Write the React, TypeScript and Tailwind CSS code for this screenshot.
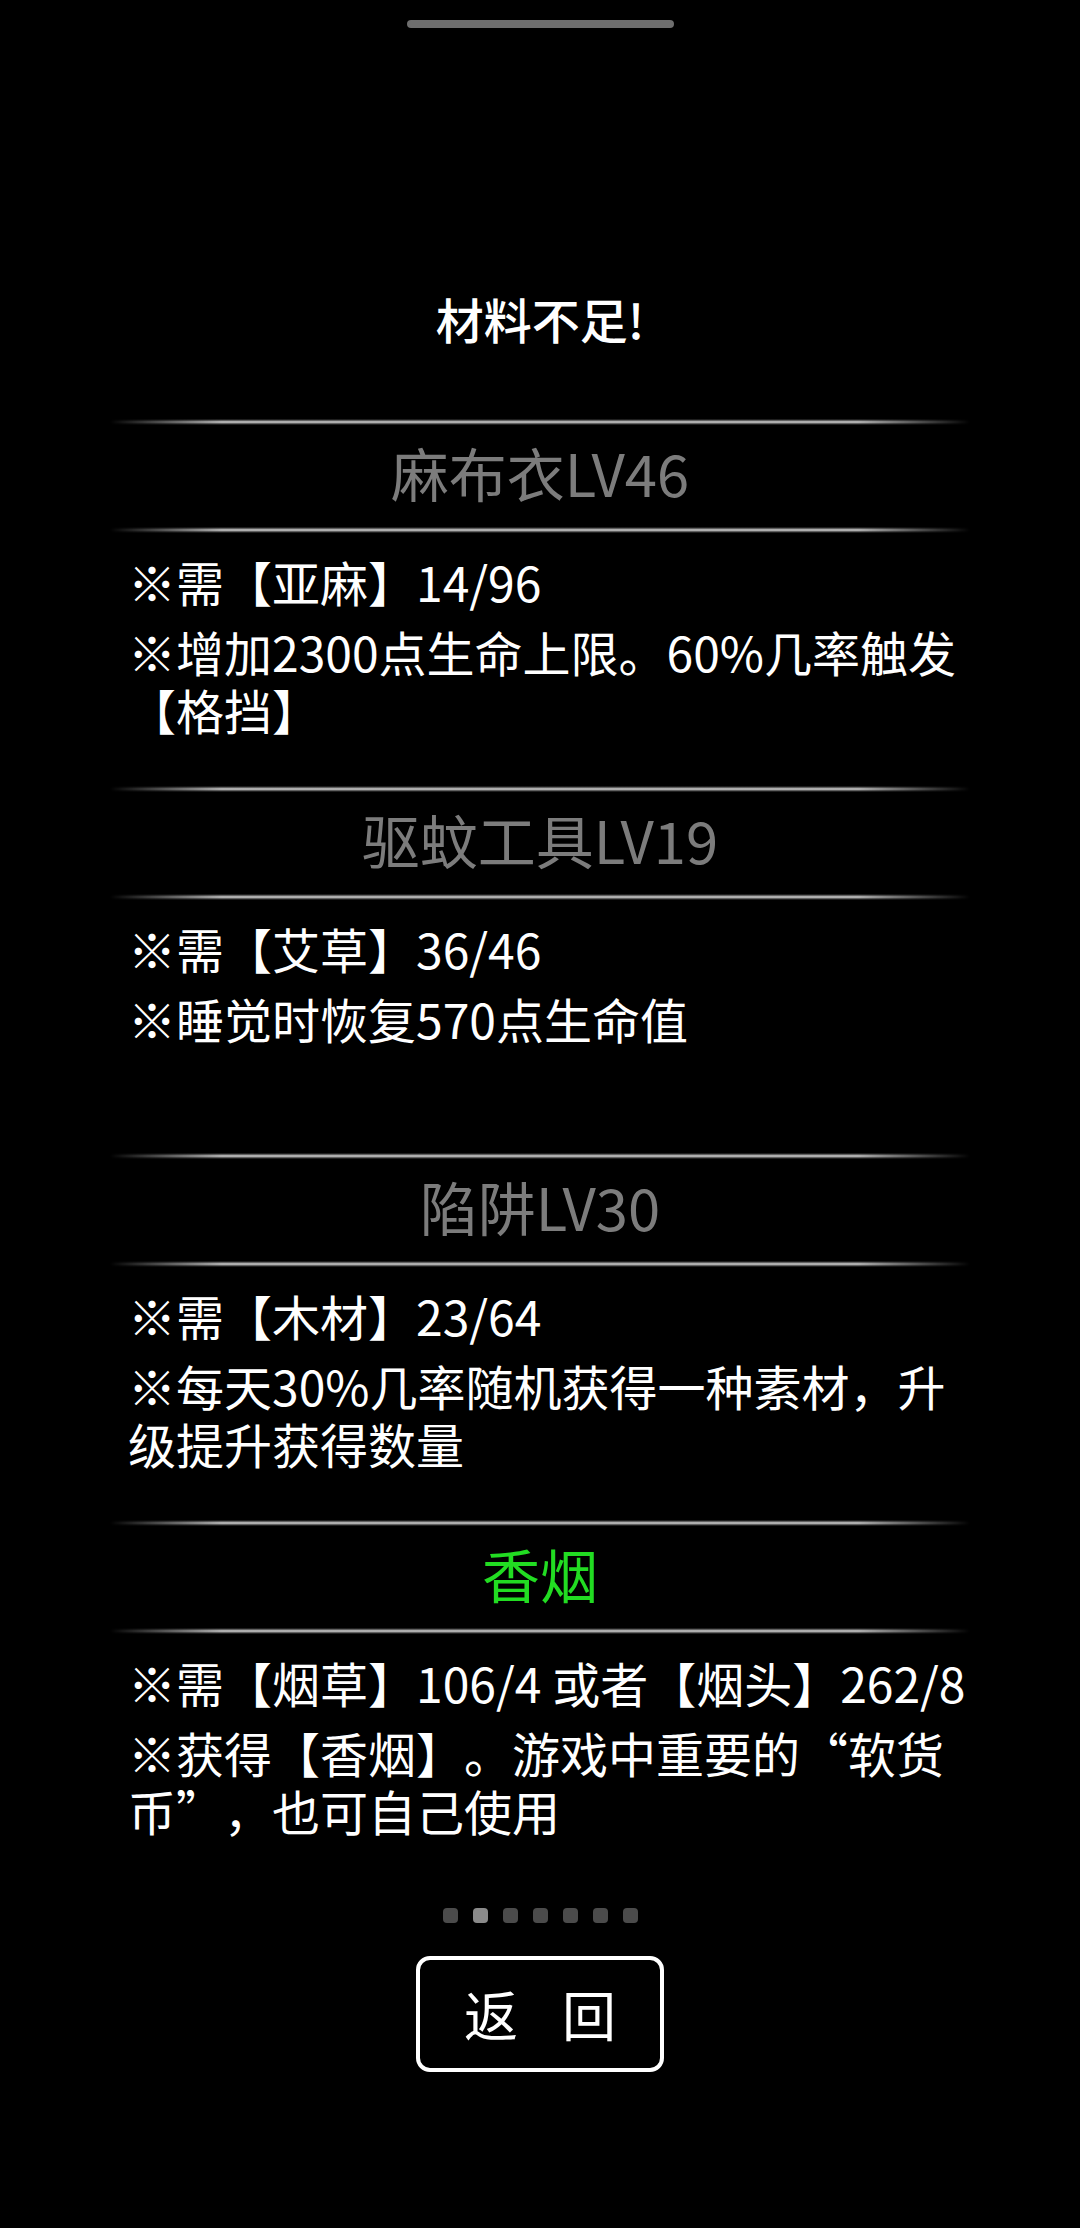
import React from "react";

type Item = {
  name: string;
  color: string;
  lines: string[];
};

const items: Item[] = [
  {
    name: "麻布衣LV46",
    color: "text-[#7c7c7c]",
    lines: ["※需【亚麻】14/96", "※增加2300点生命上限。60%几率触发【格挡】"],
  },
  {
    name: "驱蚊工具LV19",
    color: "text-[#7c7c7c]",
    lines: ["※需【艾草】36/46", "※睡觉时恢复570点生命值"],
  },
  {
    name: "陷阱LV30",
    color: "text-[#7c7c7c]",
    lines: ["※需【木材】23/64", "※每天30%几率随机获得一种素材，升级提升获得数量"],
  },
  {
    name: "香烟",
    color: "text-[#22dc22]",
    lines: ["※需【烟草】106/4 或者【烟头】262/8", "※获得【香烟】。游戏中重要的“软货币”，也可自己使用"],
  },
];

function Divider() {
  return (
    <div className="h-[6px] w-full bg-[linear-gradient(180deg,transparent,#4a4a4a_20%,#d4d4d4_50%,#4a4a4a_80%,transparent)] [mask-image:linear-gradient(90deg,transparent,black_13%,black_87%,transparent)]" />
  );
}

function Section({ item }: { item: Item }) {
  return (
    <div className="flex h-[367px] w-full flex-col">
      <Divider />
      <div className={`flex h-[102px] items-center justify-center pb-[8px] text-[58px] leading-none ${item.color}`}>
        {item.name}
      </div>
      <Divider />
      <div className="-mr-[10px] flex flex-col gap-[12px] pl-[18px] pt-[19px] text-[48px] leading-[58px] text-white">
        {item.lines.map((l) => (
          <div key={l}>{l}</div>
        ))}
      </div>
    </div>
  );
}

export default function App() {
  return (
    <div className="flex min-h-[2228px] w-full flex-col items-center bg-black font-['Noto_Sans_CJK_SC',sans-serif] [text-spacing-trim:space-all]">
      <div className="mt-[20px] h-[8px] w-[267px] rounded-full bg-[#6e6e6e]" />
      <div className="mt-[266px] h-[48px] text-[48px] font-medium leading-[48px] text-white">材料不足!</div>
      <div className="mt-[77px] w-[860px]">
        {items.map((it) => (
          <Section key={it.name} item={it} />
        ))}
      </div>
      <div className="mt-[21px] flex gap-[15px]">
        {[0, 1, 2, 3, 4, 5, 6].map((i) => (
          <div
            key={i}
            className={i === 1 ? "h-[15px] w-[15px] rounded-[4px] bg-[#8a8a8a]" : "h-[15px] w-[15px] rounded-[4px] bg-[#4b4b4b]"}
          />
        ))}
      </div>
      <button className="mt-[33px] flex h-[116px] w-[248px] items-center justify-center gap-[44px] rounded-[14px] border-[4px] border-white bg-black text-[54px] leading-none text-white">
        <span>返</span>
        <span>回</span>
      </button>
    </div>
  );
}
